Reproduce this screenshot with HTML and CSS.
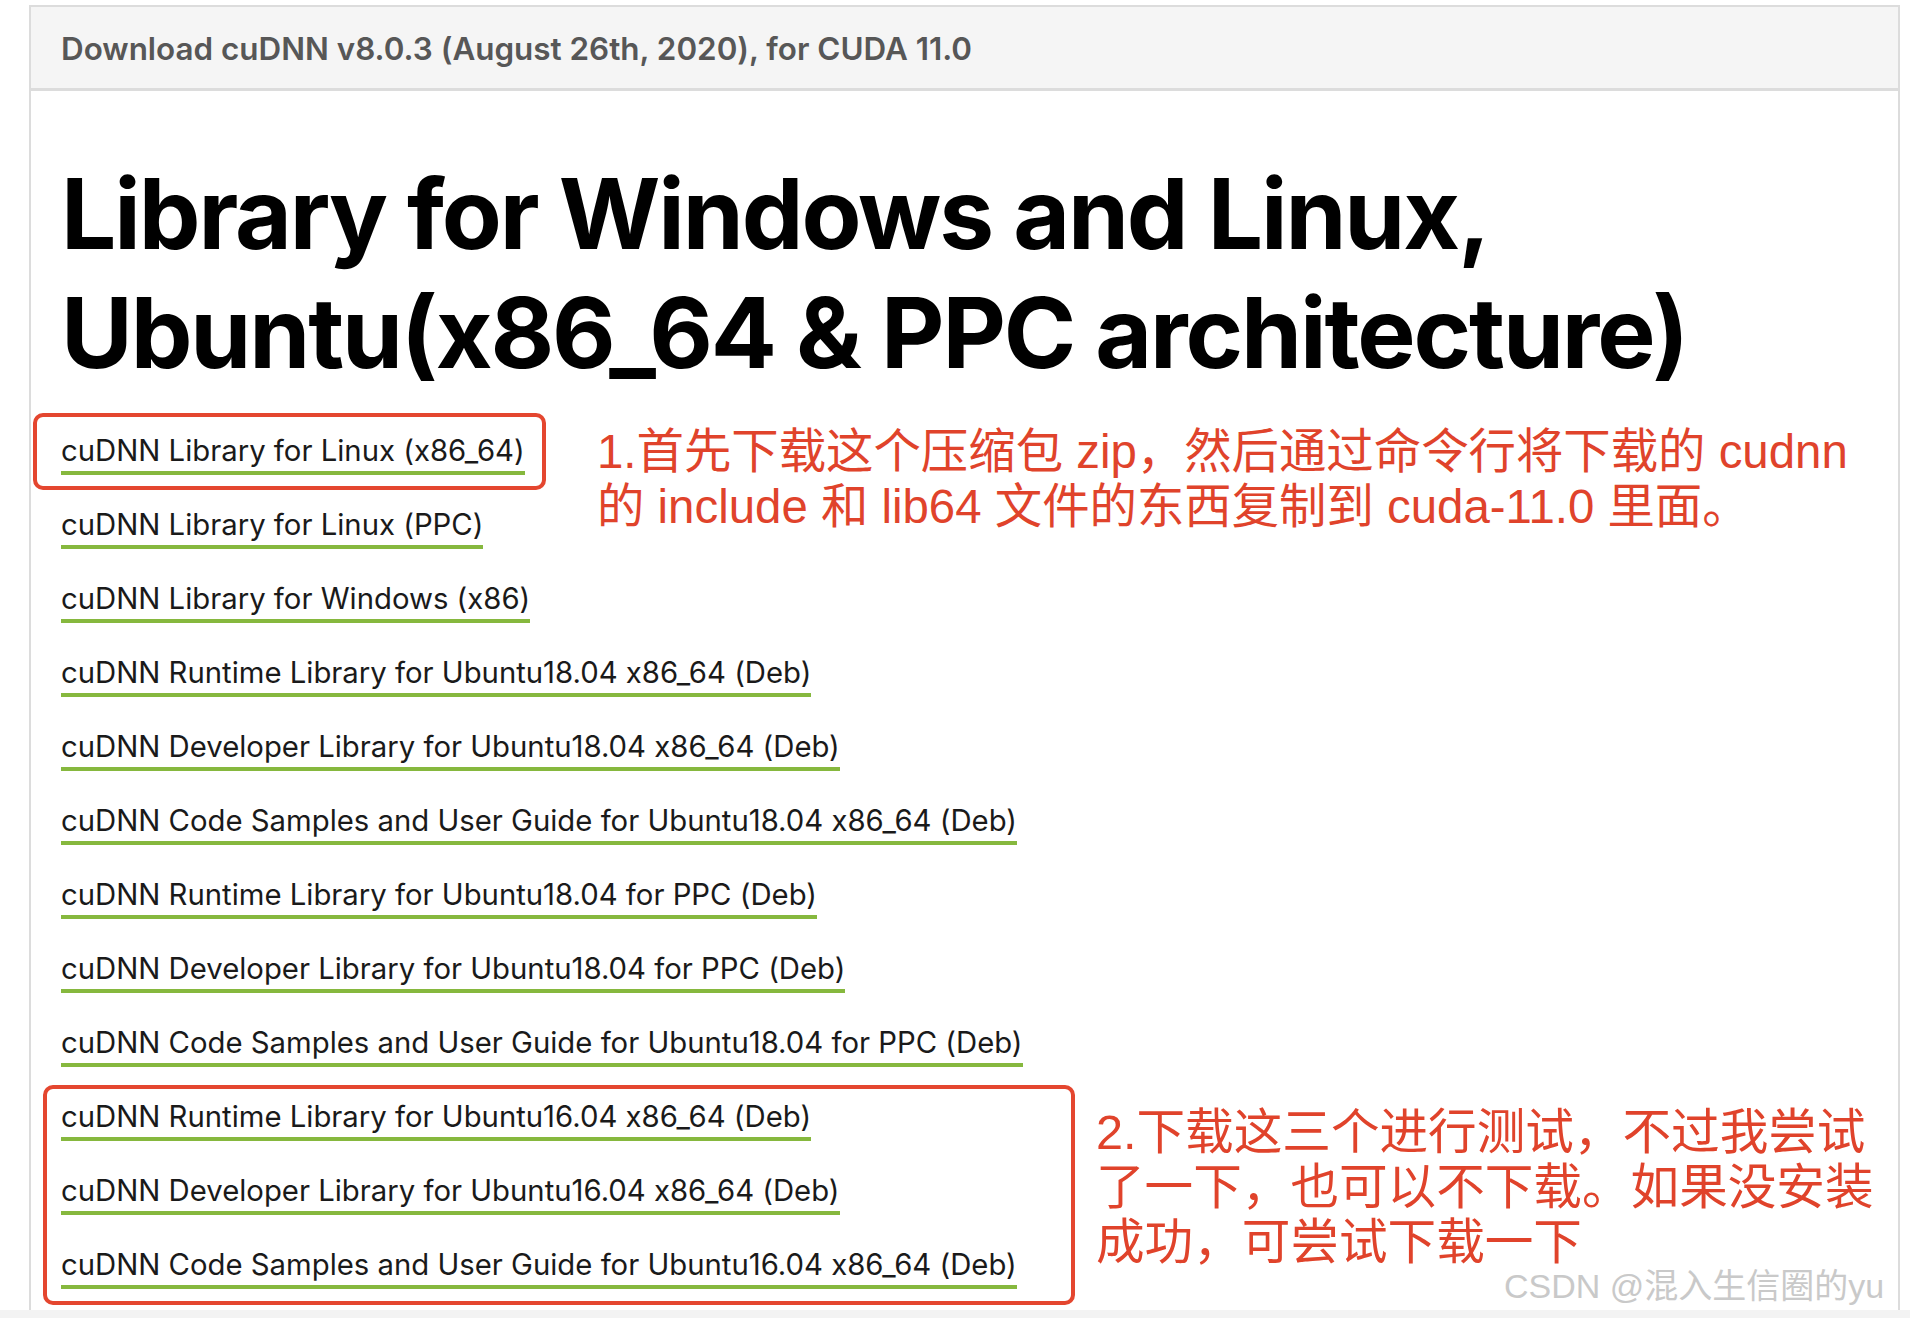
FILE: index.html
```html
<!DOCTYPE html>
<html>
<head>
    <title>cuDNN Download</title>
    <meta charset="utf-8">
    <link rel="stylesheet" href="styles.css">
</head>
<body>
    <div class="page">
        <div class="panel">
            <div class="panel-header">Download cuDNN v8.0.3 (August 26th, 2020), for CUDA 11.0</div>
            <div class="panel-body">
                <h1 class="title">Library for Windows and Linux,<br>Ubuntu(x86_64 &amp; PPC architecture)</h1>
                <ul class="downloads">
                    <li><a href="#">cuDNN Library for Linux (x86_64)</a></li>
                    <li><a href="#">cuDNN Library for Linux (PPC)</a></li>
                    <li><a href="#">cuDNN Library for Windows (x86)</a></li>
                    <li><a href="#">cuDNN Runtime Library for Ubuntu18.04 x86_64 (Deb)</a></li>
                    <li><a href="#">cuDNN Developer Library for Ubuntu18.04 x86_64 (Deb)</a></li>
                    <li><a href="#">cuDNN Code Samples and User Guide for Ubuntu18.04 x86_64 (Deb)</a></li>
                    <li><a href="#">cuDNN Runtime Library for Ubuntu18.04 for PPC (Deb)</a></li>
                    <li><a href="#">cuDNN Developer Library for Ubuntu18.04 for PPC (Deb)</a></li>
                    <li><a href="#">cuDNN Code Samples and User Guide for Ubuntu18.04 for PPC (Deb)</a></li>
                    <li><a href="#">cuDNN Runtime Library for Ubuntu16.04 x86_64 (Deb)</a></li>
                    <li><a href="#">cuDNN Developer Library for Ubuntu16.04 x86_64 (Deb)</a></li>
                    <li><a href="#">cuDNN Code Samples and User Guide for Ubuntu16.04 x86_64 (Deb)</a></li>
                </ul>
            </div>
        </div>
        <div class="page-bottom"></div>

        <!-- annotations drawn over the screenshot -->
        <div class="mark mark-one"></div>
        <p class="note note-one">1.首先下载这个压缩包 zip，然后通过命令行将下载的 cudnn<br>的 include 和 lib64 文件的东西复制到 cuda-11.0 里面。</p>
        <div class="mark mark-two"></div>
        <p class="note note-two">2.下载这三个进行测试，不过我尝试<br>了一下，也可以不下载。如果没安装<br>成功，可尝试下载一下</p>
        <div class="watermark">CSDN @混入生信圈的yu</div>
    </div>
</body>
</html>
```

FILE: styles.css
```css
* {
    box-sizing: border-box;
    margin: 0;
    padding: 0;
}

body {
    background: #fff;
    color: #1a1a1a;
    font-family: Inter, Arial, sans-serif;
    font-feature-settings: "calt" 0; /* keep "x86" from turning into a times sign */
    overflow: hidden;
}

.page {
    position: relative;
    width: 1910px;
    height: 1318px;
    overflow: hidden;
    padding-top: 5px;
}

/* main content card */
.panel {
    margin-left: 29px;
    width: 1871px;
    height: 1305px;
    border: 2px solid #dcdcdc;
    border-bottom: none;
}

.panel-header {
    height: 84px;
    display: flex;
    align-items: center;
    padding-left: 30px;
    padding-top: 3px;
    background: #f5f5f5;
    border-bottom: 3px solid #dcdcdc;
    color: #575757;
    font-size: 31.4px;
    font-weight: 600;
}

.panel-body {
    padding-left: 30px;
}

.title {
    margin-top: 63px;
    font-size: 98px;
    line-height: 119px;
    font-weight: 700;
    letter-spacing: -2.1px;
    color: #000;
}

.downloads {
    list-style: none;
    margin-top: 42px;
}
.downloads li {
    height: 74px;
}
.downloads a {
    display: inline-block;
    font-size: 29.3px;
    line-height: 34px;
    padding-bottom: 3px;
    color: #1a1a1a;
    text-decoration: none;
    border-bottom: 4px solid #86b83e;
}

.page-bottom {
    height: 8px;
    background: #f3f3f3;
}

/* red annotation boxes and notes */
.mark {
    position: absolute;
    border: 4px solid #e4462f;
    border-radius: 10px;
}
.mark-one {
    left: 33px;
    top: 413px;
    width: 513px;
    height: 77px;
}
.mark-two {
    left: 43px;
    top: 1085px;
    width: 1032px;
    height: 220px;
}

.note {
    position: absolute;
    color: #e0432b;
    font-family: "Liberation Sans", "Noto Sans CJK SC", sans-serif;
    font-size: 47.4px;
    line-height: 55px;
    white-space: nowrap;
}
.note-one {
    left: 597px;
    top: 424px;
}
.note-two {
    left: 1096px;
    top: 1105px;
    font-size: 48.6px;
}

.watermark {
    position: absolute;
    left: 1504px;
    top: 1259px;
    color: #c9c9c9;
    font-family: "Liberation Sans", "Noto Sans CJK SC", sans-serif;
    font-size: 34px;
    white-space: nowrap;
    text-shadow: 0 0 2px #fff;
}
```
